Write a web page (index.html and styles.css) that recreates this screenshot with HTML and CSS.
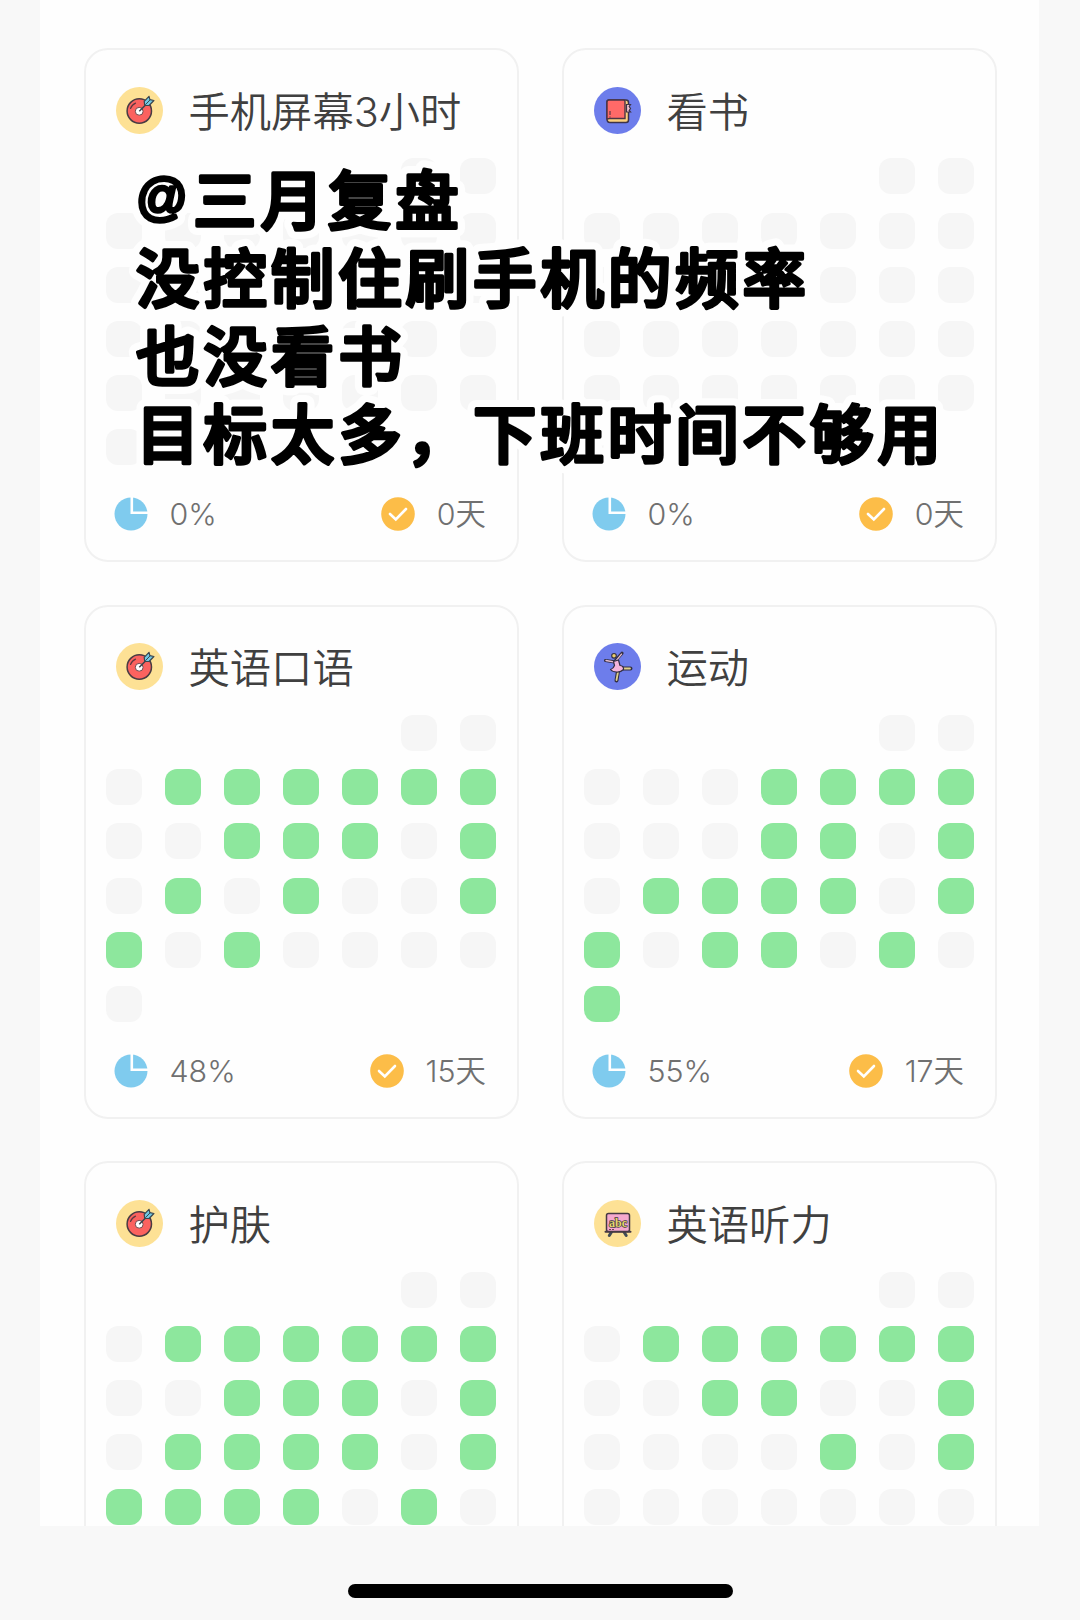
FILE: index.html
```html
<!DOCTYPE html>
<html lang="zh-CN">
<head>
    <meta charset="UTF-8">
    <meta name="viewport" content="width=device-width, initial-scale=1.0">
    <title>三月复盘</title>
    <link rel="stylesheet" href="styles.css">
</head>
<body>
    <svg class="sprite" aria-hidden="true">
        <symbol id="icon-target" viewBox="0 0 47 47">
            <circle cx="23.5" cy="23.5" r="23.5" fill="#fde195"/>
            <circle cx="23.3" cy="24" r="12.2" fill="#fb625f" stroke="#493b43" stroke-width="1.5"/>
            <path d="M14.5 21.5q1.5-4 5-5.4" fill="none" stroke="#5b3940" stroke-width="1.2" stroke-linecap="round"/>
            <circle cx="23.2" cy="24.3" r="3.9" fill="#fff" stroke="#6f484c" stroke-width="1"/>
            <path d="M23.3 24.2l8.5-8.5" stroke="#3b454d" stroke-width="1.5"/>
            <path d="M28.7 18.4l-.5-4.1 4.8-5 .9 3.3 4 .9-4.8 5z" fill="#72c9e4" stroke="#3b454d" stroke-width="1.2" stroke-linejoin="round"/>
            <path d="M29.3 17.8l5-5.2" stroke="#3b454d" stroke-width="1"/>
        </symbol>
        <symbol id="icon-book" viewBox="0 0 47 47">
            <circle cx="23.5" cy="23.5" r="23.5" fill="#6d7deb"/>
            <path d="M13 31.5V15q0-2 2-2h17q2.5 0 2.5 2.5V33q0 2.5-2.5 2.5H16q-3 0-3-3.5z" fill="#fdd17d" stroke="#3d3349" stroke-width="1.5"/>
            <path d="M13 31.5V15q0-2 2-2h14.5q1.5 0 1.5 1.5V31.5H15.5q-2.2 0-2.5 1z" fill="#ff6a68" stroke="#4b3444" stroke-width="1.4"/>
            <path d="M32.5 17.5h4l-1.3 2 1.3 2-1.3 2 1.3 1.5h-4z" fill="#f1c4cf" stroke="#3d3349" stroke-width="1.2"/>
            <path d="M16 24v4M16 29.5v1" stroke="#4b3444" stroke-width="1.1"/>
        </symbol>
        <symbol id="icon-dancer" viewBox="0 0 47 47">
            <circle cx="23.5" cy="23.5" r="23.5" fill="#6d7deb"/>
            <g stroke-linecap="round" stroke-linejoin="round">
                <path d="M24 28l-1.5 9.5M27 25.5h9.5" stroke="#332f43" stroke-width="4"/>
                <path d="M24 29l-1.5 8M29 25.5h7" stroke="#dfd18a" stroke-width="1.8"/>
                <path d="M11.5 17.5l9 1.3 7.5-8.5" fill="none" stroke="#332f43" stroke-width="3.2"/>
                <path d="M12 17.5l9 1.6 6.5-8" fill="none" stroke="#e8bfd2" stroke-width="1.3"/>
                <path d="M19.5 18.5l5-1.5 1.5 5.5q4 .5 3.5 4-3 3-7 2.5-4 0-6-2.5 3-1 4-4z" fill="#f5b4db" stroke="#332f43" stroke-width="1.2"/>
                <circle cx="20" cy="12.8" r="2.3" fill="#edcf6c" stroke="#332f43" stroke-width="1.1"/>
            </g>
        </symbol>
        <symbol id="icon-abc" viewBox="0 0 47 47">
            <circle cx="23.5" cy="23.5" r="23.5" fill="#fde195"/>
            <path d="M17.5 32l-2.2 3.5M30 32l2.2 3.5" stroke="#414b55" stroke-width="3" stroke-linecap="round"/>
            <path d="M11.5 31.8h25" stroke="#463943" stroke-width="2" stroke-linecap="round"/>
            <rect x="12.5" y="13.5" width="23" height="18" rx="2" fill="#f5a8ce" stroke="#463943" stroke-width="1.5"/>
            <path d="M15 29.5h6" stroke="#6b4559" stroke-width="1.2" stroke-dasharray="2 1"/>
            <text class="abc" x="24" y="26.5" text-anchor="middle">abc</text>
        </symbol>
        <symbol id="icon-pie" viewBox="0 0 34 34">
            <circle cx="17" cy="17" r="16.5" fill="#7fcbee"/>
            <path d="M17.8 0v15.8H34" fill="none" stroke="#fff" stroke-width="2.6"/>
        </symbol>
        <symbol id="icon-check" viewBox="0 0 34 34">
            <circle cx="17" cy="17" r="16.8" fill="#fcbd48"/>
            <path d="M9 17l5.8 5.5L25 12" fill="none" stroke="#fff" stroke-width="2.6" stroke-linecap="round"/>
        </symbol>
    </svg>

    <main class="panel">
        <div class="habits" id="habits"></div>
    </main>

    <svg class="note" viewBox="0 0 850 330">
        <use class="note-halo" href="#note-lines"/>
        <g class="note-ink">
            <g id="note-lines">
                <text class="at" x="11" y="64.5">@</text>
                <text x="68" y="74">三月复盘</text>
                <text x="11" y="152">没控制住刷手机的频率</text>
                <text x="11" y="230">也没看书</text>
                <text x="11" y="308">目标太多，下班时间不够用</text>
            </g>
        </g>
    </svg>

    <div class="home-bar"></div>

    <script src="app.js"></script>
</body>
</html>
```
FILE: styles.css
```css
* {
    margin: 0;
    padding: 0;
    box-sizing: border-box;
}

body {
    position: relative;
    height: 1620px;
    overflow: hidden;
    background: #f8f8f8;
    color: #404040;
    font-family: Inter, 'Noto Sans CJK SC', sans-serif;
}

.sprite {
    position: absolute;
    width: 0;
    height: 0;
}

.panel {
    width: 999px;
    height: 1526px;
    margin-left: 40px;
    padding: 48px 43.5px 0;
    overflow: hidden;
    background: #fefefe;
}

.habits {
    display: grid;
    grid-template-columns: 435px 435px;
    grid-auto-rows: 514px;
    gap: 42.7px 43px;
}

.card {
    display: flex;
    flex-direction: column;
    padding: 36px 19.5px 29px 20px;
    border: 2.5px solid #f1f1f1;
    border-radius: 24px;
}

.card-header {
    display: flex;
    align-items: center;
    gap: 26px;
    height: 48px;
    padding-left: 10px;
}

.card-icon {
    flex: none;
    width: 47px;
    height: 47px;
}

.card-title {
    padding-top: 3px;
    font-size: 41.3px;
    font-weight: 350;
    line-height: 48px;
    white-space: nowrap;
}

.days {
    display: grid;
    grid-template-columns: repeat(7, 36px);
    grid-auto-rows: 36px;
    gap: 18.2px 23.1px;
    margin-top: 24.4px;
}

.day {
    border-radius: 12px;
    background: #f6f6f6;
}

/* The month starts on the sixth weekday */
.day:first-child {
    grid-column-start: 6;
}

.day.done {
    background: #8de79d;
}

.card-footer {
    display: flex;
    justify-content: space-between;
    margin-top: auto;
    padding: 0 11px 0 8.5px;
}

.stat {
    display: flex;
    align-items: center;
    gap: 21.5px;
    color: #707070;
    font-size: 30.4px;
    font-weight: 350;
    line-height: 34px;
}

.stat svg {
    width: 34px;
    height: 34px;
}

.abc {
    font-family: 'Liberation Serif', serif;
    font-size: 12px;
    font-weight: bold;
    fill: #e2d66c;
    stroke: #3e373f;
    stroke-width: 1.4px;
    paint-order: stroke;
}

/* Handwritten note lying over the cards */
.note {
    position: absolute;
    top: 150px;
    left: 125px;
    width: 850px;
    height: 330px;
    font-family: 'Noto Sans CJK SC', sans-serif;
    font-size: 63.5px;
    font-weight: 500;
    letter-spacing: 3.9px;
    stroke-linejoin: round;
}

.note-ink {
    fill: #000;
    stroke: #000;
    stroke-width: 3.6px;
}

.note-halo {
    fill: #fefefe;
    stroke: #fefefe;
    stroke-width: 18px;
}

.at {
    font-family: 'Liberation Sans', sans-serif;
    font-size: 51px;
    font-weight: 400;
}

.home-bar {
    width: 385px;
    height: 14px;
    margin: 57.5px auto 0;
    border-radius: 7px;
    background: #000;
}
```
FILE: app.js
```javascript
// One digit per day of the month, 1 = done
const habits = [
    { name: '手机屏幕3小时', icon: 'target', days: '0000000000000000000000000000000' },
    { name: '看书', icon: 'book', days: '0000000000000000000000000000000' },
    { name: '英语口语', icon: 'target', days: '0001111110011101010100110100000' },
    { name: '运动', icon: 'dancer', days: '0000011110001101011110110110101' },
    { name: '护肤', icon: 'target', days: '0001111110011101011110111110100' },
    { name: '英语听力', icon: 'abc', days: '0001111110011001000010100000000' }
];

function renderCard(habit) {
    const days = habit.days.split('');
    const done = days.filter(d => d === '1').length;
    const percent = Math.round(done / days.length * 100);

    return `
        <section class="card">
            <div class="card-header">
                <svg class="card-icon"><use href="#icon-${habit.icon}"/></svg>
                <h2 class="card-title">${habit.name}</h2>
            </div>
            <div class="days">
                ${days.map(d => `<span class="day${d === '1' ? ' done' : ''}"></span>`).join('')}
            </div>
            <div class="card-footer">
                <div class="stat"><svg><use href="#icon-pie"/></svg><span>${percent}%</span></div>
                <div class="stat"><svg><use href="#icon-check"/></svg><span>${done}天</span></div>
            </div>
        </section>`;
}

document.getElementById('habits').innerHTML = habits.map(renderCard).join('');
```
